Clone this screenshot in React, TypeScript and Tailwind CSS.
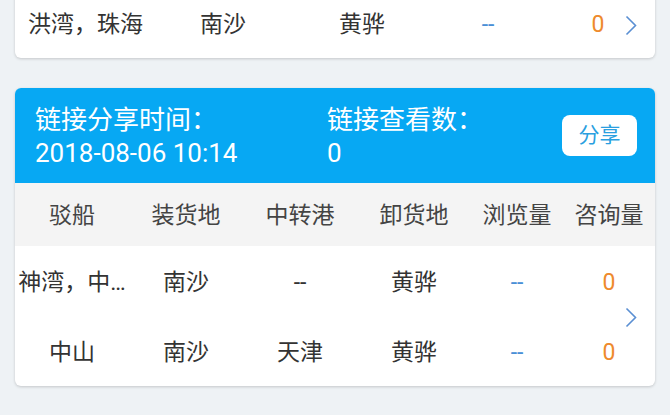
const font = "font-['Roboto','Noto_Sans_CJK_SC',sans-serif]";

const Chevron = () => (
  <svg width="12" height="21" viewBox="0 0 12 21" fill="none">
    <polyline points="1.5,1.5 10.5,10.5 1.5,19.5" stroke="#5a8fd3" strokeWidth="1.6" />
  </svg>
);

const headers = ['驳船', '装货地', '中转港', '卸货地', '浏览量', '咨询量'];

const rows = [
  { boat: '神湾，中…', from: '南沙', via: '--', to: '黄骅', views: '--', asks: '0' },
  { boat: '中山', from: '南沙', via: '天津', to: '黄骅', views: '--', asks: '0' },
];

const cols = 'grid grid-cols-[114px_114px_114px_114px_92px_92px]';

const TopCard = () => (
  <div className="relative mx-[15px] -mt-[12px] rounded-[6px] bg-white shadow-[0_1px_3px_rgba(0,0,0,0.18)]">
    <div className="grid h-[70px] grid-cols-[158px_100px_178px_74px_30px_86px] items-center pt-[4px] text-[23px] text-[#333]">
      <div className="pl-[13px] whitespace-nowrap">洪湾，珠海</div>
      <div className="text-center">南沙</div>
      <div className="text-center">黄骅</div>
      <div className="text-center text-[#4a8fd6]">--</div>
      <div />
      <div className="text-center text-[#ee8a2c]">0</div>
    </div>
    <div className="absolute right-[18px] top-[27px]">
      <Chevron />
    </div>
  </div>
);

const ShareCard = () => (
  <div className="relative mx-[15px] mt-[30px] overflow-hidden rounded-[6px] bg-white shadow-[0_1px_3px_rgba(0,0,0,0.18)]">
    <div className="flex h-[95px] items-center bg-[#07a8f3] pl-[20px] pr-[18px] pt-[3px] text-[26px] leading-[33px] text-white">
      <div className="w-[292px]">
        <div>链接分享时间：</div>
        <div>2018-08-06 10:14</div>
      </div>
      <div className="flex-1">
        <div>链接查看数：</div>
        <div>0</div>
      </div>
      <button className="-mt-[3px] h-[41px] w-[75px] rounded-[8px] bg-white text-[21px] leading-none text-[#2a9fe0]">分享</button>
    </div>
    <div className={`${cols} h-[63px] items-center bg-[#f4f4f4] pt-[4px] text-[23px] text-[#444]`}>
      {headers.map((h) => (
        <div key={h} className="text-center">{h}</div>
      ))}
    </div>
    {rows.map((r, i) => (
      <div key={i} className={`${cols} h-[70px] items-center pt-[4px] text-[23px] text-[#333]`}>
        <div className="whitespace-nowrap text-center">{r.boat}</div>
        <div className="text-center">{r.from}</div>
        <div className="text-center">{r.via}</div>
        <div className="text-center">{r.to}</div>
        <div className="text-center text-[#4a8fd6]">{r.views}</div>
        <div className="text-center text-[#ee8a2c]">{r.asks}</div>
      </div>
    ))}
    <div className="absolute right-[18px] top-[219px]">
      <Chevron />
    </div>
  </div>
);

export default function App() {
  return (
    <div className={`${font} h-[415px] w-[670px] overflow-hidden bg-[#eef2f5]`}>
      <TopCard />
      <ShareCard />
    </div>
  );
}
